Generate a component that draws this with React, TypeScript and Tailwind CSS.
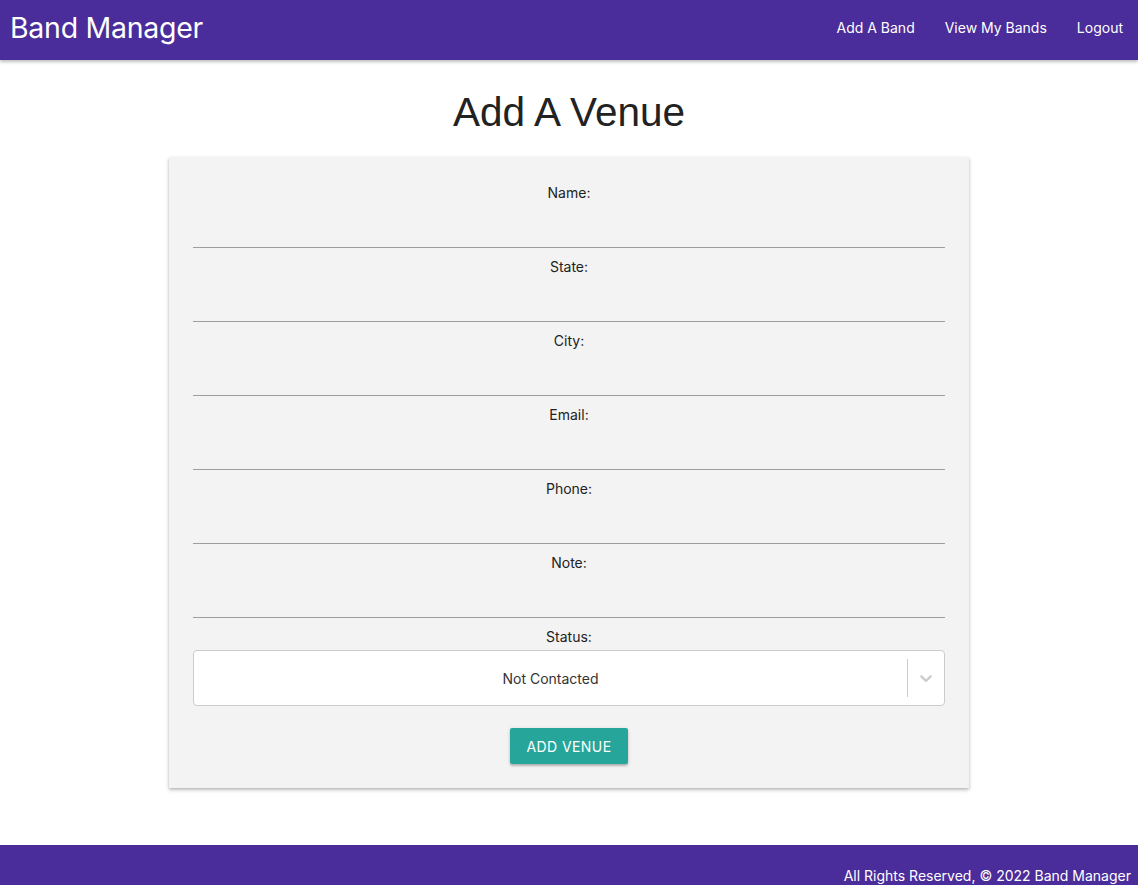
import React, { useState } from "react";

const fields = ["Name", "State", "City", "Email", "Phone", "Note"];

export default function App() {
  const [values, setValues] = useState<Record<string, string>>({});

  return (
    <div className="min-h-screen bg-white flex flex-col font-['Inter',sans-serif] text-[#222]">
      {/* Navbar */}
      <nav className="h-[60px] bg-[#4a2c9a] text-white flex items-start justify-between shadow-[0_2px_3px_rgba(0,0,0,0.25)] relative z-10">
        <a href="#" className="pl-[10px] text-[28.5px] leading-[56px] tracking-[-0.01em]">
          Band Manager
        </a>
        <ul className="flex items-center">
          {["Add A Band", "View My Bands", "Logout"].map((l) => (
            <li key={l}>
              <a href="#" className="block px-[15px] text-[14px] leading-[55px]">
                {l}
              </a>
            </li>
          ))}
        </ul>
      </nav>

      <main className="flex-1 flex flex-col items-center pb-[57px]">
        <h1 className="mt-[28px] mb-[20px] text-[40.5px] leading-[49px] font-['Liberation_Sans',Arial,sans-serif] text-[#222]">
          Add A Venue
        </h1>

        <form
          className="w-[800px] bg-[#f3f3f3] px-[24px] pt-[26px] pb-[24px] shadow-[0_2px_4px_rgba(0,0,0,0.22),0_1px_2px_rgba(0,0,0,0.12)] text-center"
          onSubmit={(e) => e.preventDefault()}
        >
          {fields.map((f) => (
            <div key={f}>
              <label className="block text-[14px] leading-[20px] text-[#222]">{f}:</label>
              <input
                className="block w-full h-[45px] mb-[9px] bg-transparent border-b border-[#9e9e9e] outline-none text-center text-[15px]"
                value={values[f] ?? ""}
                onChange={(e) => setValues({ ...values, [f]: e.target.value })}
              />
            </div>
          ))}

          <label className="block text-[14px] leading-[20px] mt-[1px] text-[#222]">Status:</label>
          <div className="mt-[3px] h-[56px] bg-white border border-[#cccccc] rounded-[4px] flex items-center">
            <div className="flex-1 text-center text-[14px] text-[#333]">Not Contacted</div>
            <span className="w-px h-[38px] bg-[#cccccc]" />
            <div className="w-[36px] flex items-center justify-center">
              <svg width="20" height="20" viewBox="0 0 20 20" fill="#cccccc">
                <path d="M4.516 7.548c0.436-0.446 1.043-0.481 1.576 0l3.908 3.747 3.908-3.747c0.533-0.481 1.141-0.446 1.574 0 0.436 0.445 0.408 1.197 0 1.615-0.406 0.418-4.695 4.502-4.695 4.502-0.217 0.223-0.502 0.335-0.787 0.335s-0.57-0.112-0.789-0.335c0 0-4.287-4.084-4.695-4.502s-0.436-1.17 0-1.615z" />
              </svg>
            </div>
          </div>

          <button
            type="submit"
            className="mt-[22px] h-[36px] px-[16px] bg-[#26a69a] text-white text-[14px] tracking-[0.03em] rounded-[2px] shadow-[0_2px_2px_rgba(0,0,0,0.2),0_1px_4px_rgba(0,0,0,0.12)]"
          >
            ADD VENUE
          </button>
        </form>
      </main>

      {/* Footer */}
      <footer className="bg-[#4a2c9a] text-white text-right pt-[21px] pb-[20px] pr-[7px]">
        <p className="text-[14px] leading-[20px]">All Rights Reserved, © 2022 Band Manager</p>
      </footer>
    </div>
  );
}
